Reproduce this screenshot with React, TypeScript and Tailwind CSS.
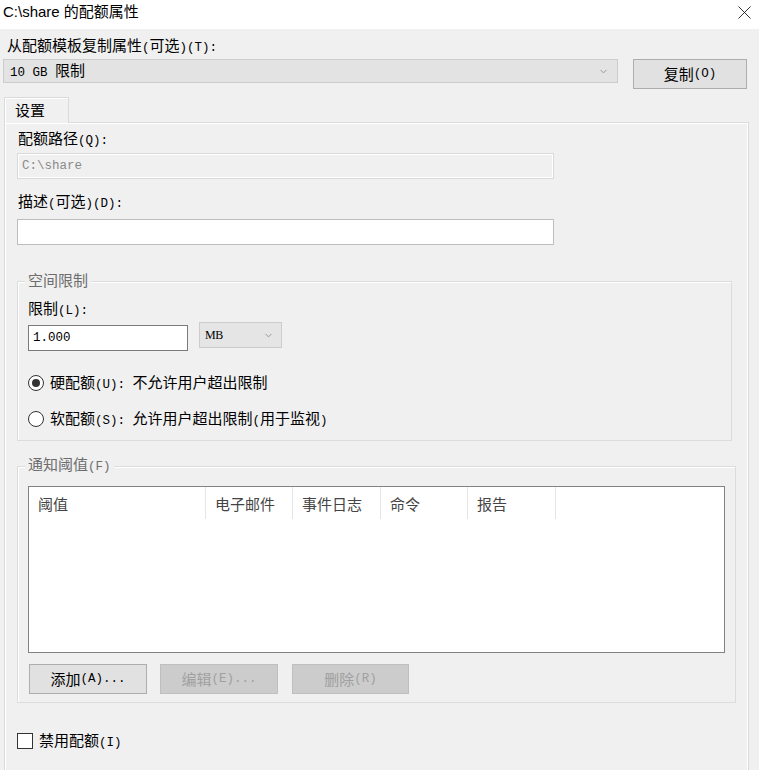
import { ChevronDown, X } from 'lucide-react'

// ASCII runs get the narrow mono face, CJK stays in the sans face
function Txt({ s }: { s: string }) {
  const parts = s.split(/([\x20-\x7e]+)/).filter(Boolean)
  return (
    <>
      {parts.map((p, i) =>
        /^[\x20-\x7e]+$/.test(p) ? (
          <span key={i} className="font-['Liberation_Mono',monospace] text-[12.5px] whitespace-pre">
            {p}
          </span>
        ) : (
          <span key={i}>{p}</span>
        )
      )}
    </>
  )
}

function Label({ s, className = '' }: { s: string; className?: string }) {
  return (
    <div className={`h-[20px] leading-[20px] text-[15px] text-black ${className}`}>
      <Txt s={s} />
    </div>
  )
}

function Radio({ checked, s }: { checked?: boolean; s: string }) {
  return (
    <div className="flex h-[20px] items-center gap-[6px]">
      <span className="flex h-[16px] w-[16px] items-center justify-center rounded-full border border-[#333] bg-white">
        {checked && <span className="h-[8px] w-[8px] rounded-full bg-[#333]" />}
      </span>
      <span className="text-[15px] leading-[20px] text-black">
        <Txt s={s} />
      </span>
    </div>
  )
}

function Btn({ s, disabled, className = '' }: { s: string; disabled?: boolean; className?: string }) {
  return (
    <button
      type="button"
      className={`flex h-[30px] items-center justify-center border text-[15px] ${
        disabled ? 'border-[#bfbfbf] bg-[#cccccc] text-[#a0a0a0]' : 'border-[#adadad] bg-[#e1e1e1] text-black'
      } ${className}`}
    >
      <Txt s={s} />
    </button>
  )
}

const columns = [
  { title: '阈值', w: 'w-[177px]' },
  { title: '电子邮件', w: 'w-[87px]' },
  { title: '事件日志', w: 'w-[88px]' },
  { title: '命令', w: 'w-[87px]' },
  { title: '报告', w: 'w-[88px]' }
]

export default function App() {
  return (
    <div className="h-[770px] w-[759px] overflow-hidden bg-[#f0f0f0] font-['Noto_Sans_CJK_SC',sans-serif] text-black">
      {/* title bar */}
      <div className="flex h-[29px] items-start justify-between bg-white pl-[3px] pr-[3px] pt-[1px]">
        <span className="font-['Liberation_Sans','Noto_Sans_CJK_SC',sans-serif] text-[15px] leading-[22px]">
          C:\share 的配额属性
        </span>
        <X className="h-[23px] w-[23px] text-[#111]" strokeWidth={0.9} />
      </div>

      <div className="pl-[3px]">
        <Label s="从配额模板复制属性(可选)(T):" className="mt-[6px] pl-[4px]" />
        <div className="mt-[4px] flex items-start">
          <div className="flex h-[24px] w-[615px] items-center justify-between border border-[#cccccc] bg-[#e3e3e3] pl-[6px] pr-[8px] text-[15px]">
            <span>
              <Txt s="10 GB 限制" />
            </span>
            <ChevronDown className="h-[11px] w-[11px] text-[#777]" strokeWidth={1.5} />
          </div>
          <Btn s="复制(O)" className="ml-[15px] w-[114px]" />
        </div>

        {/* tab */}
        <div className="ml-[1px] mt-[8px] flex">
          <div className="relative z-10 -mb-px flex h-[26px] w-[65px] items-start border border-b-0 border-[#dadada] bg-[#f0f0f0] pl-[10px] pt-[2px] text-[15px] leading-[20px] shadow-[inset_1px_1px_0_#fff]">
            设置
          </div>
        </div>

        <div className="ml-[1px] h-[660px] w-[745px] border border-[#dadada] pl-[12px] pt-[5px] shadow-[inset_1px_1px_0_#fff,inset_-1px_0_0_#fff]">
          <Label s="配额路径(Q):" className="pl-[1px]" />
          <div className="mt-[5px] flex h-[26px] w-[537px] items-center border border-[#d9d9d9] bg-[#f0f0f0] pl-[4px] text-[#8a8a8a] shadow-[inset_1px_1px_0_#fff,inset_-1px_-1px_0_#fff]">
            <Txt s="C:\share" />
          </div>

          <Label s="描述(可选)(D):" className="mt-[12px] pl-[1px]" />
          <div className="mt-[8px] h-[26px] w-[537px] border border-[#bdbdbd] bg-white" />

          {/* space limit */}
          <div className="relative mt-[36px] h-[160px] w-[715px] border border-[#dcdcdc] pl-[10px] pt-[16px] shadow-[inset_1px_1px_0_#fff]">
            <span className="absolute -top-[12px] left-[7px] bg-[#f0f0f0] px-[3px] text-[15px] leading-[20px] text-[#6d6d6d]">
              空间限制
            </span>
            <Label s="限制(L):" />
            <div className="flex items-start">
              <div className="mt-[7px] flex h-[26px] w-[160px] items-center border border-[#7a7a7a] bg-white pl-[4px] text-[15px]">
                <Txt s="1.000" />
              </div>
              <div className="ml-[11px] mt-[4px] flex h-[26px] w-[83px] items-center justify-between border border-[#cccccc] bg-[#e5e5e5] pl-[5px] pr-[7px]">
                <span className="font-['Liberation_Serif',serif] text-[12px] tracking-[-0.5px]">MB</span>
                <ChevronDown className="h-[11px] w-[11px] text-[#777]" strokeWidth={1.5} />
              </div>
            </div>
            <div className="mt-[22px]">
              <Radio checked s="硬配额(U): 不允许用户超出限制" />
            </div>
            <div className="mt-[16px]">
              <Radio s="软配额(S): 允许用户超出限制(用于监视)" />
            </div>
          </div>

          {/* notification thresholds */}
          <div className="relative mt-[25px] h-[237px] w-[719px] border border-[#dcdcdc] pl-[10px] pt-[19px] shadow-[inset_1px_1px_0_#fff]">
            <span className="absolute -top-[13px] left-[7px] bg-[#f0f0f0] px-[3px] text-[15px] leading-[20px] text-[#6d6d6d]">
              <Txt s="通知阈值(F)" />
            </span>
            <div className="h-[167px] w-[697px] border border-[#828282] bg-white">
              <div className="flex h-[32px]">
                {columns.map((c) => (
                  <div
                    key={c.title}
                    className={`${c.w} border-r border-[#e5e5e5] pl-[9px] pt-[7px] text-[15px] leading-[20px] text-[#444]`}
                  >
                    {c.title}
                  </div>
                ))}
              </div>
            </div>
            <div className="mt-[11px] flex gap-[13px] pl-[1px]">
              <Btn s="添加(A)..." className="w-[118px]" />
              <Btn s="编辑(E)..." disabled className="w-[118px]" />
              <Btn s="删除(R)" disabled className="ml-[1px] w-[117px]" />
            </div>
          </div>

          <div className="mt-[30px] flex h-[16px] items-center gap-[6px]">
            <span className="h-[16px] w-[16px] border border-[#333] bg-white" />
            <span className="text-[15px] leading-[20px]">
              <Txt s="禁用配额(I)" />
            </span>
          </div>
        </div>
      </div>
    </div>
  )
}
